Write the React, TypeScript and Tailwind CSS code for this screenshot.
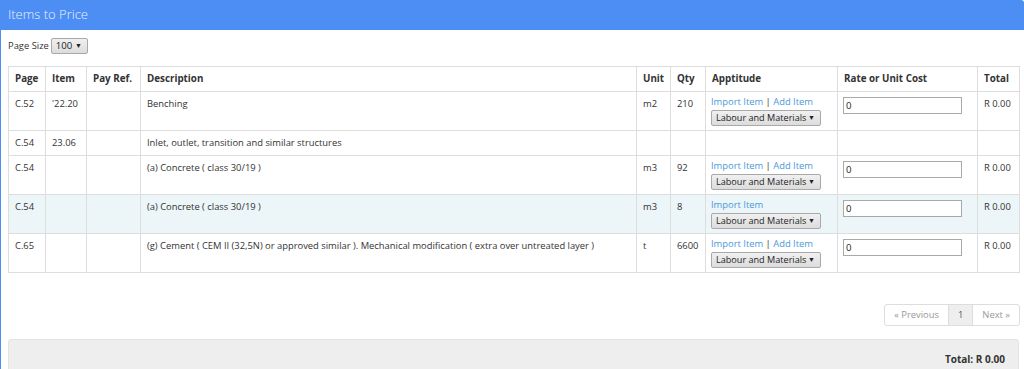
import React from "react";

type Row = {
  page: string;
  item: string;
  desc: string;
  unit: string;
  qty: string;
  apt: "both" | "import" | "none";
  rate: boolean;
  striped?: boolean;
};

const rows: Row[] = [
  { page: "C.52", item: "'22.20", desc: "Benching", unit: "m2", qty: "210", apt: "both", rate: true },
  { page: "C.54", item: "23.06", desc: "Inlet, outlet, transition and similar structures", unit: "", qty: "", apt: "none", rate: false },
  { page: "C.54", item: "", desc: "(a) Concrete ( class 30/19 )", unit: "m3", qty: "92", apt: "both", rate: true },
  { page: "C.54", item: "", desc: "(a) Concrete ( class 30/19 )", unit: "m3", qty: "8", apt: "import", rate: true, striped: true },
  { page: "C.65", item: "", desc: "(g) Cement ( CEM II (32,5N) or approved similar ). Mechanical modification ( extra over untreated layer )", unit: "t", qty: "6600", apt: "both", rate: true },
];

function Select() {
  return (
    <div className="mt-[2px] flex h-[16px] w-[110px] items-center justify-between whitespace-nowrap rounded-[2px] border border-[#a9a9a9] bg-gradient-to-b from-[#f0f0f0] to-[#dcdcdc] pl-[4px] pr-[5px] text-[9.1px] leading-[14px] text-[#222]">
      <span>Labour and Materials</span>
      <span className="text-[7px]">▼</span>
    </div>
  );
}

export default function App() {
  const td = "border border-[#dddddd] px-[6px] pt-[5px] pb-[6px] align-top leading-[13px]";
  const th = "border border-[#dddddd] px-[6px] text-left align-middle font-bold text-[9.8px] text-[#333] h-[25px] whitespace-nowrap";
  return (
    <div
      className="h-[369px] w-[1024px] overflow-hidden bg-white text-[9.4px] text-[#333]"
      style={{ fontFamily: "'Open Sans', 'Liberation Sans', sans-serif" }}
    >
      <div className="h-full border-l border-[#4d8ef5]">
        <div className="flex h-[30px] items-center rounded-tr-[3px] bg-[#4d8ef5] pl-[7px] text-[13px] font-light text-[#e9f1fe]">
          Items to Price
        </div>
        <div className="pl-[7px] pr-[4px]">
          <div className="mt-[8px] flex h-[16px] items-center text-[9.4px]">
            <span className="mr-[2px]">Page Size</span>
            <div className="inline-flex h-[16px] w-[37px] items-center justify-between rounded-[2px] border border-[#a9a9a9] bg-gradient-to-b from-[#f0f0f0] to-[#dcdcdc] pl-[4px] pr-[5px] text-[9.6px] text-[#222]">
              <span>100</span>
              <span className="text-[7px]">▼</span>
            </div>
          </div>
          <table className="mt-[12px] w-[1011px] table-fixed border-collapse text-[9.4px]">
            <colgroup>
              <col className="w-[37px]" />
              <col className="w-[41px]" />
              <col className="w-[54px]" />
              <col className="w-[496px]" />
              <col className="w-[34px]" />
              <col className="w-[35px]" />
              <col className="w-[132px]" />
              <col className="w-[140px]" />
              <col className="w-[42px]" />
            </colgroup>
            <thead>
              <tr>
                <th className={th}>Page</th>
                <th className={th}>Item</th>
                <th className={th}>Pay Ref.</th>
                <th className={th}>Description</th>
                <th className={th}>Unit</th>
                <th className={th}>Qty</th>
                <th className={th}>Apptitude</th>
                <th className={th}>Rate or Unit Cost</th>
                <th className={th}>Total</th>
              </tr>
            </thead>
            <tbody>
              {rows.map((r, i) => (
                <tr key={i} className={r.striped ? "bg-[#ecf5f8]" : ""}>
                  <td className={td}>{r.page}</td>
                  <td className={td}>{r.item}</td>
                  <td className={td}></td>
                  <td className={td}>{r.desc}</td>
                  <td className={td}>{r.unit}</td>
                  <td className={td}>{r.qty}</td>
                  <td className="whitespace-nowrap border border-[#dddddd] px-[5px] pb-[4px] pt-[4px] align-top leading-[12px]">
                    {r.apt !== "none" && (
                      <div className="flex flex-col items-start">
                        <div className="h-[12px] leading-[12px]">
                          <span className="text-[#4a9ad9]">Import Item</span>
                          {r.apt === "both" && (
                            <>
                              <span className="text-[#333]"> | </span>
                              <span className="text-[#4a9ad9]">Add Item</span>
                            </>
                          )}
                        </div>
                        <Select />
                      </div>
                    )}
                  </td>
                  <td className="border border-[#dddddd] pl-[5px] pt-[5px] align-top">
                    {r.rate && (
                      <div className="flex h-[17px] w-[119px] items-center border border-[#a9a9a9] bg-white pl-[2px] text-[9.6px] leading-[13px] text-[#222]">
                        0
                      </div>
                    )}
                  </td>
                  <td className={`${td} whitespace-nowrap`}>{r.rate ? "R 0.00" : ""}</td>
                </tr>
              ))}
            </tbody>
          </table>
          <div className="mt-[31px] flex justify-end">
            <div className="flex h-[22px] overflow-hidden rounded-[3px] border border-[#dddddd] text-[9.4px]">
              <div className="flex items-center border-r border-[#dddddd] px-[9px] text-[#999]">« Previous</div>
              <div className="flex items-center border-r border-[#dddddd] bg-[#eeeeee] px-[9px] text-[#555]">1</div>
              <div className="flex items-center px-[9px] text-[#999]">Next »</div>
            </div>
          </div>
          <div className="mt-[13px] flex h-[40px] w-[1011px] justify-end rounded-[3px] border border-[#e3e3e3] bg-[#eeeeee] pr-[13px] pt-[12px] text-[10px] font-bold text-[#333]">
            Total: R 0.00
          </div>
        </div>
      </div>
    </div>
  );
}
